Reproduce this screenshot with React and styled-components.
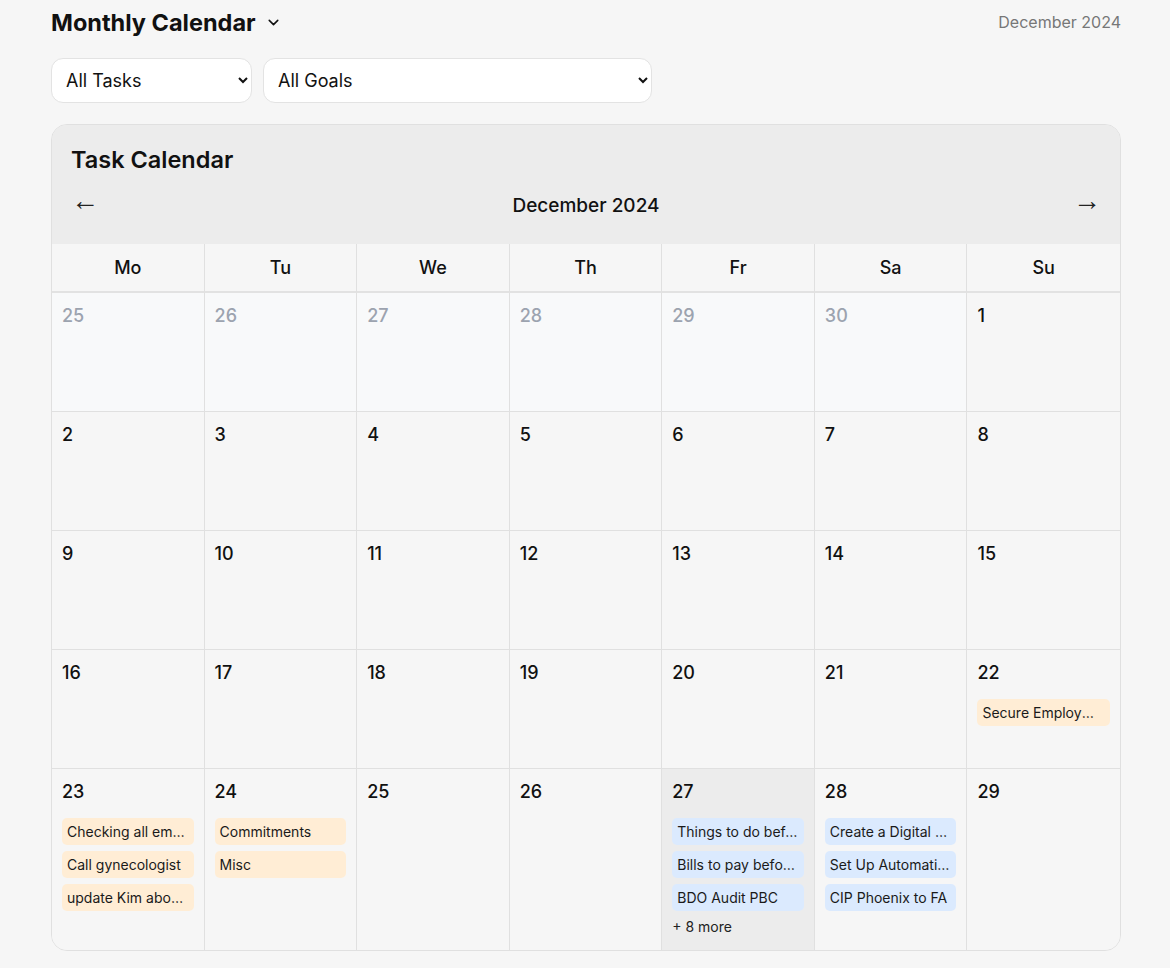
import React from "react";
import styled, { createGlobalStyle } from "styled-components";
import { ChevronDown } from "lucide-react";

const GlobalStyle = createGlobalStyle`
  * { box-sizing: border-box; }
  body {
    margin: 0;
    background: #f6f6f6;
    font-family: Inter, "Noto Sans", sans-serif;
    color: #111;
  }
`;

const Page = styled.div`
  width: 1070px;
  margin-left: 51px;
  padding: 7px 0 18px;
`;

const TopBar = styled.div`
  display: flex;
  align-items: center;
  justify-content: space-between;
  height: 30px;
`;

const TitleButton = styled.button`
  display: flex;
  align-items: center;
  gap: 9px;
  border: none;
  background: none;
  padding: 0;
  font-family: inherit;
  font-size: 23.5px;
  font-weight: 700;
  color: #111;
  cursor: pointer;
`;

const MonthLabel = styled.span`
  font-size: 16px;
  color: #777;
`;

const Filters = styled.div`
  display: flex;
  gap: 11px;
  margin: 21px 0;
`;

const Select = styled.select`
  width: ${(p) => p.$width}px;
  height: 45px;
  padding: 0 8px 0 10px;
  border: 1px solid #e3e3e3;
  border-radius: 12px;
  background: #fff;
  font-family: inherit;
  font-size: 18px;
  color: #111;
`;

const Card = styled.div`
  border: 1px solid #e0e0e0;
  border-radius: 16px;
  overflow: hidden;
`;

const CardHeader = styled.div`
  background: #ececec;
  padding: 19px 19px 24px;
`;

const CardTitle = styled.h2`
  margin: 0;
  font-size: 23.5px;
  line-height: 32px;
  font-weight: 600;
`;

const Nav = styled.div`
  display: flex;
  align-items: center;
  justify-content: space-between;
  height: 30px;
  margin-top: 14px;
`;

const ArrowButton = styled.button`
  border: none;
  background: none;
  padding: 0 0 8px;
  font-family: "Liberation Sans", "DejaVu Sans", sans-serif;
  font-size: 28px;
  line-height: 28px;
  color: #222;
  cursor: pointer;
`;

const NavMonth = styled.span`
  font-size: 19px;
  font-weight: 500;
`;

const Grid = styled.div`
  display: grid;
  grid-template-columns: repeat(7, minmax(0, 1fr));
`;

const Weekday = styled.div`
  height: 49px;
  display: flex;
  align-items: center;
  justify-content: center;
  font-size: 18px;
  font-weight: 500;
  border-right: ${(p) => (p.$last ? "none" : "1px solid #e0e0e0")};
  border-bottom: 2px solid #e2e2e2;
`;

const Cell = styled.div`
  min-width: 0;
  min-height: 119px;
  padding: 10px 10px 13px;
  background: ${(p) => (p.$today ? "#ececec" : p.$muted ? "#f8f9fa" : "#f6f6f6")};
  border-right: ${(p) => (p.$lastCol ? "none" : "1px solid #e0e0e0")};
  border-bottom: ${(p) => (p.$lastRow ? "none" : "1px solid #e0e0e0")};
`;

const DayNum = styled.div`
  font-size: 18px;
  line-height: 26px;
  font-weight: 500;
  color: ${(p) => (p.$muted ? "#9ca3af" : "#111")};
`;

const Tasks = styled.div`
  display: flex;
  flex-direction: column;
  gap: 6px;
  margin-top: 13px;
`;

const Chip = styled.div`
  height: 27px;
  line-height: 27px;
  padding: 0 5px;
  border-radius: 5px;
  font-size: 14px;
  color: #1a1a1a;
  background: ${(p) => (p.$kind === "blue" ? "#dbeafe" : "#ffedd5")};
  white-space: nowrap;
  overflow: hidden;
  text-overflow: ellipsis;
`;

const More = styled.div`
  font-size: 14px;
  line-height: 20px;
  color: #222;
`;

const weekdays = ["Mo", "Tu", "We", "Th", "Fr", "Sa", "Su"];

const tasks = {
  22: [{ t: "Secure Employment Pass", k: "orange" }],
  23: [
    { t: "Checking all emails", k: "orange" },
    { t: "Call gynecologist", k: "orange" },
    { t: "update Kim about the move", k: "orange" },
  ],
  24: [
    { t: "Commitments", k: "orange" },
    { t: "Misc", k: "orange" },
  ],
  27: [
    { t: "Things to do before leaving", k: "blue" },
    { t: "Bills to pay before year end", k: "blue" },
    { t: "BDO Audit PBC", k: "blue" },
  ],
  28: [
    { t: "Create a Digital Filing System", k: "blue" },
    { t: "Set Up Automatic Payments", k: "blue" },
    { t: "CIP Phoenix to FA", k: "blue" },
  ],
};

const days = [
  ...[25, 26, 27, 28, 29, 30].map((d) => ({ d, muted: true })),
  ...Array.from({ length: 29 }, (_, i) => ({ d: i + 1 })),
];

export default function App() {
  return (
    <>
      <GlobalStyle />
      <Page>
        <TopBar>
          <TitleButton>
            Monthly Calendar
            <ChevronDown size={17} strokeWidth={2.2} />
          </TitleButton>
          <MonthLabel>December 2024</MonthLabel>
        </TopBar>

        <Filters>
          <Select $width={201} defaultValue="all">
            <option value="all">All Tasks</option>
          </Select>
          <Select $width={389} defaultValue="all">
            <option value="all">All Goals</option>
          </Select>
        </Filters>

        <Card>
          <CardHeader>
            <CardTitle>Task Calendar</CardTitle>
            <Nav>
              <ArrowButton>←</ArrowButton>
              <NavMonth>December 2024</NavMonth>
              <ArrowButton>→</ArrowButton>
            </Nav>
          </CardHeader>

          <Grid>
            {weekdays.map((w, i) => (
              <Weekday key={w} $last={i === 6}>
                {w}
              </Weekday>
            ))}
            {days.map((day, i) => {
              const list = day.muted ? [] : tasks[day.d] || [];
              return (
                <Cell
                  key={i}
                  $muted={day.muted}
                  $today={!day.muted && day.d === 27}
                  $lastCol={i % 7 === 6}
                  $lastRow={i >= 28}
                >
                  <DayNum $muted={day.muted}>{day.d}</DayNum>
                  {list.length > 0 && (
                    <Tasks>
                      {list.map((task) => (
                        <Chip key={task.t} $kind={task.k}>
                          {task.t}
                        </Chip>
                      ))}
                      {day.d === 27 && <More>+ 8 more</More>}
                    </Tasks>
                  )}
                </Cell>
              );
            })}
          </Grid>
        </Card>
      </Page>
    </>
  );
}
